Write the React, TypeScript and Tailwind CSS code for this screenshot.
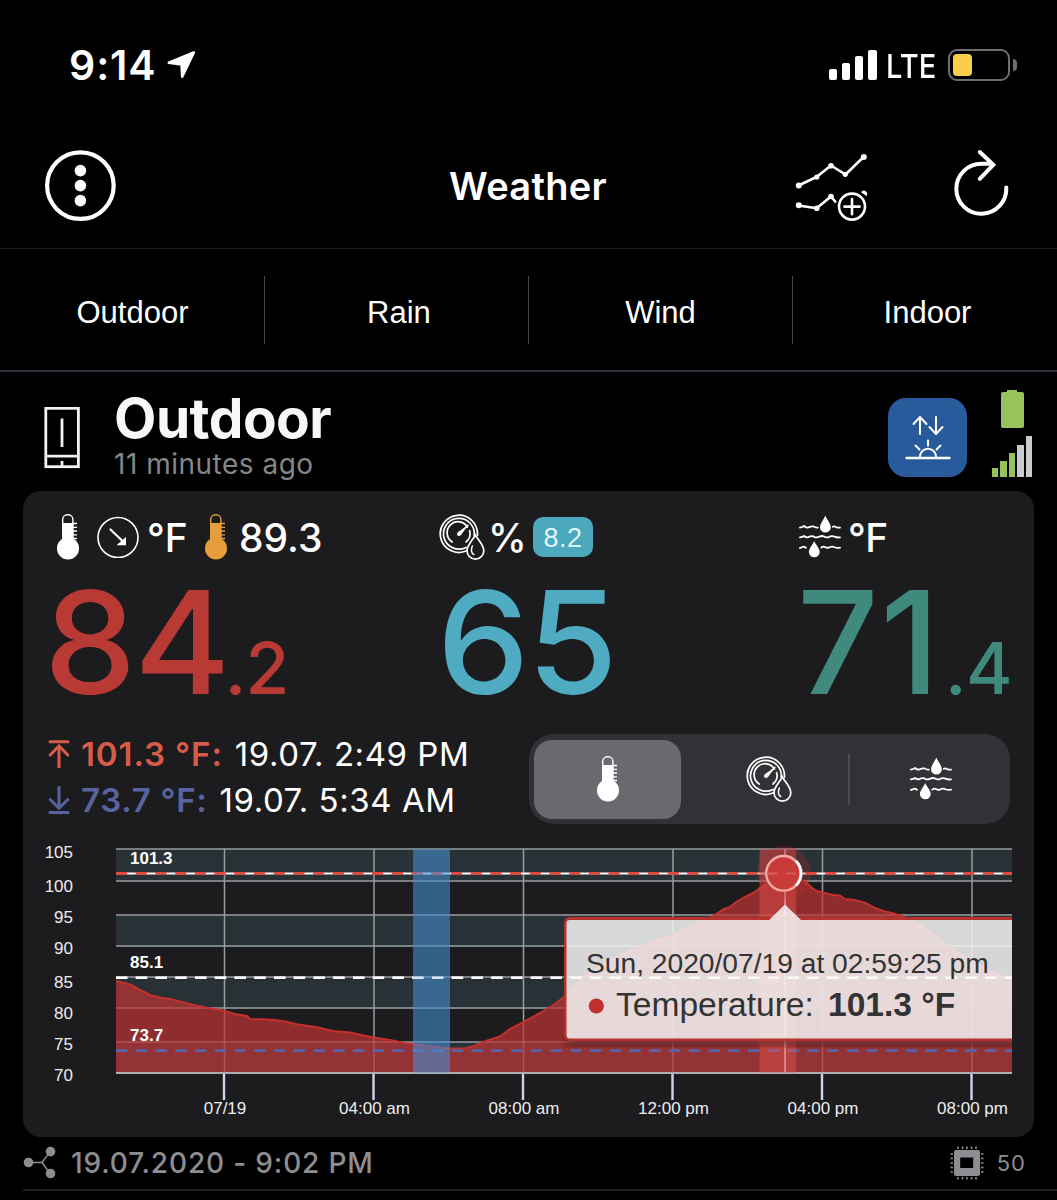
import React from 'react';

const inter = "font-['Inter','Liberation_Sans',sans-serif]";
const helvetica = "font-['Liberation_Sans',Arial,sans-serif]";

const tabs = [
  { label: 'Outdoor', style: 'pl-px' },
  { label: 'Rain', style: 'border-l pl-[5px]' },
  { label: 'Wind', style: 'border-l' },
  { label: 'Indoor', style: 'border-l pl-[5px]' },
];

const yAxis = [
  { value: 105, y: 849, label: 858 },
  { value: 100, y: 881, label: 892 },
  { value: 95, y: 915, label: 923 },
  { value: 90, y: 946, label: 954 },
  { value: 85, y: 977, label: 988 },
  { value: 80, y: 1008, label: 1019 },
  { value: 75, y: 1042, label: 1050 },
  { value: 70, y: 1073, label: 1081 },
];

const xAxis = [
  { label: '07/19', x: 224.5 },
  { label: '04:00 am', x: 374 },
  { label: '08:00 am', x: 523.5 },
  { label: '12:00 pm', x: 673 },
  { label: '04:00 pm', x: 822.5 },
  { label: '08:00 pm', x: 972 },
];

const temperatureLine =
  '116,981 122,982.5 130,984.5 140,990 150,995 160,997.5 170,999 182,1002 193,1005 208,1008 223,1010.5 235,1014 247,1016 250,1019 268,1019.5 283,1021 298,1024.5 316,1027 333,1031 350,1032.5 373,1037.5 390,1040 407,1043.5 428,1046 450,1048.5 465,1048.5 474,1046 483,1042 492,1039 500,1036.5 510,1029 520,1024 540,1013 552,1006 564,997 583,978 600,966 617,957 634,949 650,943 673,935 692,926 710,918 717,913.5 723,909.5 730,907 736,902 743,898 750,894.5 755,892 760,888 773,880 785,874 796,877 807,883 812,888 817,891 833,895 840,895.5 845,899 855,900 866,903 874,907.5 883,911 892,913 902,916 923,927 947,945 970,960 993,973 1012,980';

function Thermometer({ color = '#ffffff' }: { color?: string }) {
  return (
    <svg width="22" height="46" viewBox="0 0 22 46" className="shrink-0">
      <rect x="5.7" y="0.8" width="10.2" height="30" rx="4.6" fill="none" stroke={color} strokeWidth="1.4" />
      <path d="M5.4 9H16.2V28H5.4Z" fill={color} />
      <path d="M16 9.5h4M16 13.3h4M16 17h4M16 20.8h4M16 24.5h4" stroke={color} strokeWidth="1.3" />
      <circle cx="11" cy="34.4" r="11" fill={color} />
    </svg>
  );
}

function HumidityGauge() {
  return (
    <svg width="46" height="46" viewBox="0 0 46 46" className="shrink-0" fill="none" stroke="#fff" strokeWidth="1.7" strokeLinecap="round">
      <path d="M27.5 36.8A18.6 18.6 0 1 1 38.4 21.5" />
      <path d="M27 33.4A15.4 15.4 0 1 1 35.2 21.5" />
      <path d="M13.2 28A11 11 0 1 1 28.5 13" />
      <path d="M30.6 16.5A11 11 0 0 1 27 28" />
      <path d="M20.5 19.5L28.8 11.5" />
      <circle cx="20" cy="20" r="2" fill="#fff" stroke="none" />
      <path d="M18.8 18.2L29.5 10.8L21.8 21.2Z" fill="#fff" stroke="none" />
      <path d="M36.3 20.8C34 26 28 31 28 36.7A8.4 8.4 0 0 0 44.8 36.7C44.8 31 39 26 36.3 20.8Z" />
      <path d="M33.4 32C31.8 35 32 39 34.8 40.5" strokeWidth="1.5" />
    </svg>
  );
}

function DewPoint() {
  return (
    <svg width="42" height="44" viewBox="0 0 42 44" className="shrink-0" fill="none" stroke="#fff" strokeWidth="1.8" strokeLinecap="round" strokeLinejoin="round">
      <path d="M0.9 12.6Q3.5 12.2 5 11Q8 13.6 10.5 12Q12.5 11 14.5 11.4Q16.5 13 18.8 12.6" />
      <path d="M33.8 11.8Q35.5 10.8 37 12Q38.5 13 41 12.6" />
      <path d="M0.9 22.4Q3.5 22.2 5 21Q8 23.4 10.5 21.6Q12.5 20.6 14.5 21.4Q17.5 23.4 20.5 21.6Q23 20.4 25 21.6Q28 23.4 31 21.4Q33.5 20.6 35.5 21.6Q38 22.8 41 22.4" />
      <path d="M0.9 33Q2.5 32.8 4 31.6Q5.5 31.6 7 32.8" />
      <path d="M22.3 32.6Q24 31 26 32Q28.5 33.8 31 32Q33.5 31 35.5 32.2Q38 33.4 41 32.6" />
      <path d="M26.3 0.5C25.2 4 21 8.4 21 12.4A5.4 5.2 0 0 0 31.8 12.4C31.8 8.4 27.5 4 26.3 0.5Z" fill="#fff" stroke="none" />
      <path d="M15.2 26C14.1 29.2 9.9 33.2 9.9 37A5.4 5.2 0 0 0 20.7 37C20.7 33.2 16.4 29.2 15.2 26Z" fill="#fff" stroke="none" />
    </svg>
  );
}

function StatusBar() {
  return (
    <div className="flex h-[130px] items-start justify-between pl-[69px] pr-[40px]">
      <div className="flex items-start">
        <span className="mt-[45px] text-[41px] font-semibold leading-none tracking-[0.9px]">9:14</span>
        <svg width="30" height="30" viewBox="0 0 30 30" className="ml-[10px] mt-[50px]">
          <path d="M26.8 2.5L1.8 12.8L14.6 14.5L15.2 26.8Z" fill="#fff" stroke="#fff" strokeWidth="2.6" strokeLinejoin="round" />
        </svg>
      </div>
      <div className="flex items-start">
        <div className="mt-[50px] flex h-[30px] items-end gap-[5px]">
          <span className="h-[11px] w-[8px] rounded-[2px] bg-white" />
          <span className="h-[17px] w-[8px] rounded-[2px] bg-white" />
          <span className="h-[24px] w-[8px] rounded-[2px] bg-white" />
          <span className="h-[30px] w-[9px] rounded-[2px] bg-white" />
        </div>
        <span className="ml-[9px] mt-[50px] w-[54px] origin-left scale-x-[0.88] text-[33px] font-medium leading-none">LTE</span>
        <div className="ml-[8px] mt-[49px] flex h-[32px] w-[62px] rounded-[9px] border-[2.5px] border-[#6f6d73] p-[3px]">
          <span className="w-[19px] rounded-[4px] bg-[#f8cf46]" />
        </div>
        <span className="ml-[3px] mt-[59px] h-[12px] w-[4px] rounded-r-full bg-[#6f6d73]" />
      </div>
    </div>
  );
}

function NavBar() {
  return (
    <div className="grid h-[119px] grid-cols-[1fr_auto_1fr] items-center border-b border-[#222224] pb-[7px] pl-[44px] pr-[47px]">
      <svg width="72" height="72" viewBox="0 0 72 72">
        <circle cx="36.4" cy="35.6" r="33.3" fill="none" stroke="#fff" strokeWidth="4.2" />
        <circle cx="36.4" cy="20.6" r="5.8" fill="#fff" />
        <circle cx="36.4" cy="35.6" r="5.8" fill="#fff" />
        <circle cx="36.4" cy="50.6" r="5.8" fill="#fff" />
      </svg>
      <h1 className="pl-[2px] text-[38px] font-semibold leading-none tracking-[0.3px]">Weather</h1>
      <div className="flex items-center justify-end gap-[85px]">
        <svg width="74" height="70" viewBox="0 0 74 70" fill="none" stroke="#fff" strokeWidth="2.6" strokeLinejoin="round">
          <path d="M3.5 34.5L21.5 26L36 14.5L50.5 23.5L68.5 6" />
          <path d="M3.5 54.5L21.5 57.3L36 45.5L41 51.5" />
          <g fill="#fff" stroke="none">
            <circle cx="3.8" cy="34.5" r="3" />
            <circle cx="21.8" cy="26" r="2.6" />
            <circle cx="36" cy="14.8" r="2.8" />
            <circle cx="50.3" cy="23.3" r="2.6" />
            <circle cx="68.8" cy="6" r="3" />
            <circle cx="3.8" cy="54.3" r="3" />
            <circle cx="21.8" cy="57.2" r="2.8" />
            <circle cx="36" cy="45.5" r="2.8" />
            <path d="M66 41.2A3 3 0 0 1 71.5 45Z" />
          </g>
          <circle cx="57" cy="55.6" r="13" />
          <path d="M57 48V63.2M49.4 55.6H64.6" strokeLinecap="round" />
        </svg>
        <svg width="56" height="70" viewBox="0 1 56 70" className="overflow-visible" fill="none" stroke="#fff" strokeWidth="4" strokeLinecap="round">
          <path d="M52.3 37.5A25 25 0 1 1 27.5 13.8H38" />
          <path d="M25.8 2L39.3 14.8L25.8 28.8" strokeLinejoin="miter" />
        </svg>
      </div>
    </div>
  );
}

function TabBar() {
  return (
    <div className={`grid h-[123px] grid-cols-[264px_264px_264px_265px] items-center border-b-2 border-[#2a333b] ${helvetica}`}>
      {tabs.map((tab) => (
        <div
          key={tab.label}
          className={`flex h-[68px] items-center justify-center border-[#46464a] pt-[5px] text-[31px] leading-none ${tab.style}`}
        >
          {tab.label}
        </div>
      ))}
    </div>
  );
}

function DeviceHeader() {
  return (
    <div className="flex h-[119px] items-start pl-[44px] pr-[24px]">
      <svg width="36" height="62" viewBox="0 0 36 62" className="mt-[35px]" fill="none" stroke="#f2f2f4" strokeWidth="2.8">
        <rect x="1.8" y="1.3" width="32.6" height="58.4" />
        <path d="M18 11.5V40M1.8 49.2H34.4" />
        <path d="M18 54V59" />
      </svg>
      <div className="ml-[34px] mt-[18px] flex-1">
        <h2 className="text-[55px] font-bold leading-[56px] tracking-[-0.5px] text-[#f8f8fa]">Outdoor</h2>
        <p className="mt-[4px] text-[28px] leading-none tracking-[0.5px] text-[#85858a]">11 minutes ago</p>
      </div>
      <div className="mt-[26px] flex h-[79px] w-[79px] items-center justify-center rounded-[18px] bg-[#275b9b]">
        <svg width="46" height="46" viewBox="0 0 46 46" fill="none" stroke="#fff" strokeWidth="2" strokeLinecap="round" strokeLinejoin="round">
          <path d="M15 19V2M8.5 9L15 2L21.5 9" />
          <path d="M31 2V19M24.5 12L31 19L37.5 12" />
          <path d="M1.5 43H44.5" strokeWidth="2.4" />
          <path d="M14.8 42A8 8 0 0 1 31.2 42M23 25.5V30.5M10.5 30.5L14.5 34.5M35.5 30.5L31.5 34.5" />
        </svg>
      </div>
      <div className="ml-[24px] mt-[18px] flex w-[42px] flex-col items-center">
        <div className="h-[2px] w-[10px] bg-[#98c35c]" />
        <div className="h-[36px] w-[23px] rounded-[2px] bg-[#98c35c]" />
        <div className="mt-[8px] flex h-[41px] items-end gap-[2px]">
          <span className="h-[9px] w-[6.5px] bg-[#98c35c]" />
          <span className="h-[16px] w-[6.5px] bg-[#98c35c]" />
          <span className="h-[24px] w-[6.5px] bg-[#98c35c]" />
          <span className="h-[32px] w-[6.5px] bg-[#cbcbcd]" />
          <span className="h-[41px] w-[6.5px] bg-[#cbcbcd]" />
        </div>
      </div>
    </div>
  );
}

function Readings() {
  return (
    <div className="grid grid-cols-[394px_356px_1fr] pl-[22px] pt-[23px]">
      <div>
        <div className="flex h-[46px] items-center pl-[12px] text-[39px] font-medium leading-none">
          <Thermometer />
          <svg width="42" height="42" viewBox="0 0 42 42" className="ml-[18px]">
            <circle cx="21" cy="21.5" r="20" fill="none" stroke="#fff" strokeWidth="1.6" />
            <path d="M13.5 13.5L25.5 25" stroke="#fff" strokeWidth="2.2" strokeLinecap="round" />
            <path d="M29 21V29.2H19.5Z" fill="#fff" />
          </svg>
          <span className="ml-[8px] w-[45px]">°F</span>
          <span className="ml-[13px] flex">
            <Thermometer color="#e69d3c" />
          </span>
          <span className="ml-[12px]">89.3</span>
        </div>
        <div className="-ml-px mt-[10px] flex items-baseline text-[143px] font-medium leading-none text-[#b93a34]">
          <span className="origin-left scale-x-[1.025] tracking-[-2px]">84</span>
          <span className="ml-px text-[71px] leading-none tracking-[-1px]">.2</span>
        </div>
      </div>
      <div>
        <div className="flex h-[46px] items-center text-[39px] font-medium leading-none">
          <HumidityGauge />
          <span className="ml-[3px] w-[37px] tracking-[-1px]">%</span>
          <span className={`ml-[8px] flex h-[40px] w-[60px] items-center justify-center rounded-[10px] bg-[#4ca8bd] pt-[3px] text-[27px] font-normal tracking-[0.5px] text-[#dff8fb] ${helvetica}`}>
            8.2
          </span>
        </div>
        <div className="mt-[10px] flex items-baseline text-[143px] font-medium leading-none text-[#4eabc1]">
          <span className="-ml-[2px] origin-left scale-x-[1.025] tracking-[-2px]">65</span>
        </div>
      </div>
      <div>
        <div className="flex h-[46px] items-center pl-[4px] text-[39px] font-medium leading-none">
          <DewPoint />
          <span className="ml-[7px] tracking-[-0.5px]">°F</span>
        </div>
        <div className="mt-[10px] flex items-baseline pl-[2px] text-[143px] font-medium leading-none text-[#3f897d]">
          <span className="tracking-[1.5px]">71</span>
          <span className="ml-[4px] text-[71px] leading-none tracking-[-0.5px]">.4</span>
        </div>
      </div>
    </div>
  );
}

function Extremes() {
  return (
    <div className="mt-[18px] flex h-[93px] justify-between pl-[25px] pr-[24px]">
      <div className="text-[33px] leading-[46px]">
        <div className="flex items-center">
          <svg width="22" height="28" viewBox="0 0 22 28" fill="none" stroke="#d85a48" strokeWidth="3" strokeLinecap="round">
            <path d="M2 1.8H20M11 27V6M2.2 15L11 6L19.8 15" />
          </svg>
          <span className="ml-[11px] font-semibold tracking-[0.9px] text-[#d85a48]">101.3 °F:</span>
          <span className="ml-[12px] tracking-[0.55px]">19.07. 2:49 PM</span>
        </div>
        <div className="flex items-center">
          <svg width="22" height="28" viewBox="0 0 22 28" fill="none" stroke="#58639f" strokeWidth="3" strokeLinecap="round">
            <path d="M2 26.4H20M11 1.4V22M2.2 13.5L11 22.2L19.8 13.5" />
          </svg>
          <span className="ml-[11px] font-semibold tracking-[0.7px] text-[#58639f]">73.7 °F:</span>
          <span className="ml-[12px] tracking-[0.55px]">19.07. 5:34 AM</span>
        </div>
      </div>
      <div className="mt-[3px] flex h-[90px] w-[481px] items-center rounded-[25px] bg-[#323136] p-[5px]">
        <div className="flex h-[79px] w-[147px] items-center justify-center rounded-[18px] bg-[#6a696f]">
          <Thermometer />
        </div>
        <div className="flex w-[167px] justify-center pl-[8px]">
          <HumidityGauge />
        </div>
        <span className="h-[51px] w-[2px] bg-[#4c4b51]" />
        <div className="flex flex-1 justify-center pl-[6px]">
          <DewPoint />
        </div>
      </div>
    </div>
  );
}

function TemperatureChart() {
  return (
    <svg width="1011" height="313" viewBox="23 824 1011 313" className={`block ${helvetica}`}>
      <defs>
        <clipPath id="plot">
          <rect x="116" y="840" width="896" height="235" />
        </clipPath>
        <filter id="soft" x="-10%" y="-20%" width="120%" height="150%">
          <feGaussianBlur stdDeviation="3" />
        </filter>
      </defs>

      {/* alternating bands */}
      {[849, 915, 977, 1042].map((y) => (
        <rect key={y} x="116" y={y} width="896" height="32" fill="#283136" />
      ))}

      {/* grid */}
      {yAxis.map((row) => (
        <path key={row.value} d={`M116 ${row.y}H1012`} stroke="#999da0" strokeWidth="1.7" />
      ))}
      {xAxis.map((col) => (
        <path key={col.label} d={`M${col.x} 849V1073`} stroke="#999da0" strokeWidth="1.5" />
      ))}

      {/* temperature area */}
      <polygon points={`116,1073 ${temperatureLine} 1012,1073`} fill="#bd3534" fillOpacity="0.72" />
      <polyline points={temperatureLine} fill="none" stroke="#c5302c" strokeWidth="2" strokeLinejoin="round" />
      <path d="M116 1073H1012" stroke="#b0aeb0" strokeWidth="1.8" />

      {/* mean, maximum and minimum */}
      <path d="M116 873.5H1012" stroke="#ffffff" strokeWidth="2.2" />
      <path d="M116 873.5H1012" stroke="#dc4b42" strokeWidth="2.8" strokeDasharray="11.2 8.5" />
      <path d="M116 977.8H1012" stroke="#ffffff" strokeWidth="2.6" strokeDasharray="11.4 8.35" />
      <path d="M116 1050.7H1012" stroke="#5963a8" strokeWidth="2.8" strokeDasharray="11.4 8.35" />

      {/* time of minimum and maximum */}
      <rect x="413" y="849" width="37" height="223.5" fill="#4491d4" fillOpacity="0.57" />
      <rect x="759.5" y="849" width="36.5" height="223.5" fill="#e0504a" fillOpacity="0.5" />
      <path d="M785 849V1073" stroke="#dc8a86" strokeWidth="1.8" />

      <g clipPath="url(#plot)">
        <circle cx="784" cy="873" r="27" fill="#c5302c" fillOpacity="0.25" />
      </g>
      <circle cx="783.5" cy="873.3" r="17.3" fill="#c93b38" stroke="#f4a9a6" strokeWidth="2.4" />
      <path d="M796 861A17.3 17.3 0 0 1 796 885.5" fill="none" stroke="#ffffff" strokeWidth="2.8" />
      <path d="M767 873.5H777M786 873.5H796" stroke="#d9605b" strokeWidth="2" />

      <g fill="#ffffff" fontSize="17" fontWeight="700">
        <text x="130" y="864">101.3</text>
        <text x="130" y="968">85.1</text>
        <text x="130" y="1041">73.7</text>
      </g>

      {/* tooltip */}
      <g clipPath="url(#plot)">
        <path d="M566 1038H1020V1045H566Z" fill="#3a0d0d" fillOpacity="0.6" filter="url(#soft)" />
        <path
          d="M570 918.5H1020V1039.5H570Q565.5 1039.5 565.5 1035V923Q565.5 918.5 570 918.5Z"
          fill="none"
          stroke="#b5322f"
          strokeWidth="3"
        />
        <path
          d="M570 920H769L785 904.5L801 920H1020V1038.5H570Q566.5 1038.5 566.5 1035V923Q566.5 920 570 920Z"
          fill="#f5f5f5"
          fillOpacity="0.86"
        />
        {/* mean line stays visible through the tooltip */}
        <path d="M116 977.8H1012" stroke="#ffffff" strokeOpacity="0.6" strokeWidth="2.6" strokeDasharray="11.4 8.35" />
      </g>
      <text x="586" y="973" fontSize="28.2" fill="#333333">
        Sun, 2020/07/19 at 02:59:25 pm
      </text>
      <circle cx="596.3" cy="1006" r="7.6" fill="#c1302d" />
      <text x="616" y="1015.5" fontSize="33.6" fill="#333333">
        Temperature:
      </text>
      <text x="828" y="1015.5" fontSize="33.6" fontWeight="700" fill="#333333">
        101.3 °F
      </text>

      {/* axis ticks and labels */}
      {xAxis.map((col) => (
        <g key={col.label}>
          <path d={`M${col.x - 0.5} 1074V1100`} stroke="#ccd6eb" strokeWidth="2.4" />
          <text x={col.x + 0.5} y="1114" fontSize="17" fill="#ececee" textAnchor="middle">
            {col.label}
          </text>
        </g>
      ))}
      {yAxis.map((row) => (
        <text key={row.value} x="73" y={row.label} fontSize="17" fill="#ececee" textAnchor="end">
          {row.value}
        </text>
      ))}
    </svg>
  );
}

function Footer() {
  const pins = [8, 12.5, 17, 21.5, 26];
  return (
    <div className="ml-[23px] flex h-[54px] items-center justify-between border-b-2 border-[#202022] pr-[31px] text-[#8e8d92]">
      <div className="flex items-center">
        <svg width="33" height="34" viewBox="0 0 33 34">
          <path d="M5 16.5H19L27 5.8M19 16.5L27 27.5" fill="none" stroke="#8e8d92" strokeWidth="1.4" />
          <circle cx="5.5" cy="16.5" r="4.8" fill="#8e8d92" />
          <circle cx="27.5" cy="5.6" r="4.8" fill="#8e8d92" />
          <circle cx="27.5" cy="27.5" r="4.8" fill="#8e8d92" />
        </svg>
        <span className="ml-[15px] text-[28px] font-medium leading-none tracking-[0.85px]">19.07.2020 - 9:02 PM</span>
      </div>
      <div className="flex items-center">
        <svg width="34" height="34" viewBox="0 0 34 34">
          <path d="M6 4H28Q30 4 30 6V28Q30 30 28 30H6Q4 30 4 28V6Q4 4 6 4ZM10.2 11.5V22H23.2V11.5Z" fill="#8e8d92" fillRule="evenodd" />
          {pins.map((p) => (
            <path key={p} d={`M${p} 0.5V3M${p} 31V33.5M0.5 ${p}H3M31 ${p}H33.5`} stroke="#8e8d92" strokeWidth="1.6" />
          ))}
        </svg>
        <span className="ml-[13px] text-[22px] leading-none tracking-[1px]">50</span>
      </div>
    </div>
  );
}

export default function App() {
  return (
    <div className={`h-[1200px] w-[1057px] overflow-hidden bg-black text-white ${inter}`}>
      <StatusBar />
      <NavBar />
      <TabBar />
      <DeviceHeader />
      <div className="ml-[23px] h-[646px] w-[1011px] rounded-[18px] bg-[#1c1c1e]">
        <Readings />
        <Extremes />
        <TemperatureChart />
      </div>
      <Footer />
    </div>
  );
}
